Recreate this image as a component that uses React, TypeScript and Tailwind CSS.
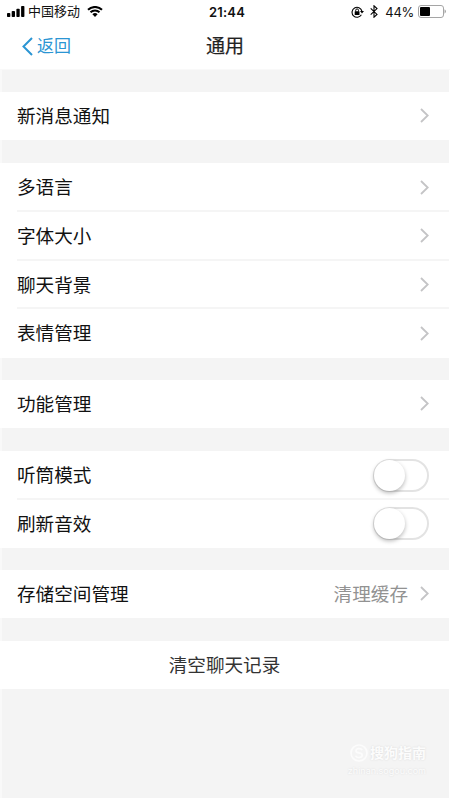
import { useState } from "react";

const fontStack =
  "font-['Inter','Noto_Sans_CJK_SC',sans-serif]";

const Chevron = () => (
  <svg
    className="h-[15px] w-[9px] shrink-0"
    viewBox="0 0 9 15"
    fill="none"
    stroke="#c4c4c6"
    strokeWidth="1.8"
  >
    <path d="M1 1l6.7 6.5L1 14" />
  </svg>
);

type RowProps = {
  label: string;
  value?: string;
  divider?: boolean;
  checked?: boolean;
  onToggle?: () => void;
};

function Row({ label, value, divider, checked, onToggle }: RowProps) {
  return (
    <div className="flex min-h-0 flex-1 pl-[17px]">
      <div
        className={`flex flex-1 items-center border-b-2 pr-[20px] pt-[1.5px] ${
          divider ? "border-[#f5f5f5]" : "border-transparent"
        }`}
      >
        <span className="flex-1 text-[18.6px] leading-6">{label}</span>
        {value && (
          <span className="mr-[12px] text-[18.6px] leading-6 text-[#929292]">
            {value}
          </span>
        )}
        {onToggle ? (
          <button
            role="switch"
            aria-checked={checked}
            aria-label={label}
            onClick={onToggle}
            className={`flex h-[33px] w-[56px] items-center rounded-full border-2 border-[#e3e3e3] ${
              checked ? "justify-end bg-green-500" : "bg-white"
            }`}
          >
            <span className="-ml-px size-[31px] rounded-full bg-white shadow-[0_2px_4px_rgba(0,0,0,0.28)]" />
          </button>
        ) : (
          <Chevron />
        )}
      </div>
    </div>
  );
}

function StatusBar() {
  return (
    <div className="grid h-[23px] grid-cols-[1fr_auto_1fr] items-center pl-[7px] pr-[4px] text-[13px] leading-4">
      <div className="flex items-center">
        <svg className="h-[11px] w-[18px]" viewBox="0 0 18 11">
          <rect x="0" y="7" width="3.3" height="4" rx="0.8" />
          <rect x="4.7" y="5" width="3.3" height="6" rx="0.8" />
          <rect x="9.4" y="2.7" width="3.3" height="8.3" rx="0.8" />
          <rect x="14.1" y="0" width="3.3" height="11" rx="0.8" />
        </svg>
        <span className="ml-[3px] -mt-px">中国移动</span>
        <svg className="ml-[7px] h-[11px] w-[16px]" viewBox="0 0 16 11">
          <path
            d="M1 3.8a10 10 0 0 1 14 0M3.5 6.3a6.4 6.4 0 0 1 9 0"
            fill="none"
            stroke="#000"
            strokeWidth="2"
          />
          <path d="M5.4 8.3a3.7 3.7 0 0 1 5.2 0L8 11z" />
        </svg>
      </div>
      <span className="pl-px text-[13px] font-semibold tracking-[0.2px]">
        21:44
      </span>
      <div className="flex items-center justify-end">
        <svg className="h-[12px] w-[13px]" viewBox="0 0 13 12" fill="none">
          <path
            d="M10.4 8.8A5 5 0 1 1 10.9 5"
            stroke="#000"
            strokeWidth="1.1"
          />
          <path d="M9 5.1h4L11 7.6z" fill="#000" />
          <rect x="3.7" y="5.3" width="4.8" height="3.6" rx="0.5" fill="#000" />
          <path d="M4.7 5.5V4.3a1.4 1.4 0 0 1 2.8 0v1.2" stroke="#000" />
        </svg>
        <svg
          className="ml-[6px] h-[13px] w-[8px]"
          viewBox="0 0 8 13"
          fill="none"
          stroke="#000"
          strokeWidth="1.1"
        >
          <path d="M.7 3.4l6.3 6L4 12.2V.8l3 2.8-6.3 6" />
        </svg>
        <span className="ml-[7px] text-[13px] tracking-[-0.3px]">44%</span>
        <svg className="ml-[4px] h-[13px] w-[28px]" viewBox="0 0 28 13">
          <rect
            x=".5"
            y=".5"
            width="25"
            height="12"
            rx="2.5"
            fill="none"
            stroke="#a5a5a5"
          />
          <rect x="2" y="2" width="10" height="9" rx="1" />
          <path d="M26.5 4.3q3 2.2 0 4.4z" fill="#a5a5a5" />
        </svg>
      </div>
    </div>
  );
}

export default function App() {
  const [earpiece, setEarpiece] = useState(false);
  const [refreshSound, setRefreshSound] = useState(false);

  return (
    <div
      lang="zh-CN"
      className={`flex h-[800px] w-[450px] flex-col overflow-hidden bg-white text-[#111] ${fontStack}`}
    >
      <StatusBar />
      <header className="grid h-[47px] grid-cols-3 items-center border-b border-[#f9f9f9]">
        <button className="flex items-center pl-[22px] text-[17px] leading-6 text-[#2b95d3]">
          <svg
            className="mr-[4px] h-[19px] w-[11px]"
            viewBox="0 0 11 19"
            fill="none"
            stroke="currentColor"
            strokeWidth="2"
          >
            <path d="M10 1L1.5 9.5 10 18" />
          </svg>
          返回
        </button>
        <h1 className="pt-px text-center text-[19px] leading-6 text-[#222] [-webkit-text-stroke:0.2px_#222]">
          通用
        </h1>
      </header>

      {/* Settings groups */}
      <main className="mb-[2px] mr-px flex flex-1 flex-col border-l-2 border-[#f9f9f9] bg-[#f4f4f4]">
        <section className="-ml-[2px] mt-[22px] flex h-12 flex-col bg-white">
          <Row label="新消息通知" />
        </section>
        <section className="-ml-[2px] mt-[23px] flex h-[195px] flex-col bg-white">
          <Row label="多语言" divider />
          <Row label="字体大小" divider />
          <Row label="聊天背景" divider />
          <Row label="表情管理" />
        </section>
        <section className="-ml-[2px] mt-[22px] flex h-12 flex-col bg-white">
          <Row label="功能管理" />
        </section>
        <section className="-ml-[2px] mt-[23px] flex h-[97px] flex-col bg-white">
          <Row
            label="听筒模式"
            divider
            checked={earpiece}
            onToggle={() => setEarpiece(!earpiece)}
          />
          <Row
            label="刷新音效"
            checked={refreshSound}
            onToggle={() => setRefreshSound(!refreshSound)}
          />
        </section>
        <section className="-ml-[2px] mt-[22px] flex h-12 flex-col bg-white">
          <Row label="存储空间管理" value="清理缓存" />
        </section>
        <button className="-ml-[2px] mt-[23px] h-12 bg-white text-[18.6px] leading-6 text-[#333]">
          清空聊天记录
        </button>

        {/* Watermark */}
        <div className="mr-[23px] mt-[55px] flex flex-col items-end text-[#fcfcfc]">
          <div className="flex items-center gap-[2px]">
            <svg
              className="size-[18px]"
              viewBox="0 0 18 18"
              fill="none"
              stroke="currentColor"
              strokeWidth="1.7"
            >
              <circle cx="9" cy="9" r="8" />
              <path d="M12.2 6.2Q11.5 4.6 9 4.6q-3 0-3 2.1 0 1.8 3 2.2 3.2.4 3.2 2.4 0 2.2-3.2 2.2-2.7 0-3.4-1.8" />
            </svg>
            <span className="text-[14px] font-bold leading-[18px] [text-shadow:0_0_2px_#d8d8d8]">
              搜狗指南
            </span>
          </div>
          <span className="mt-[3px] text-[9px] leading-3 [text-shadow:0_0_2px_#d8d8d8]">
            zhinan.sogou.com
          </span>
        </div>
      </main>
    </div>
  );
}
